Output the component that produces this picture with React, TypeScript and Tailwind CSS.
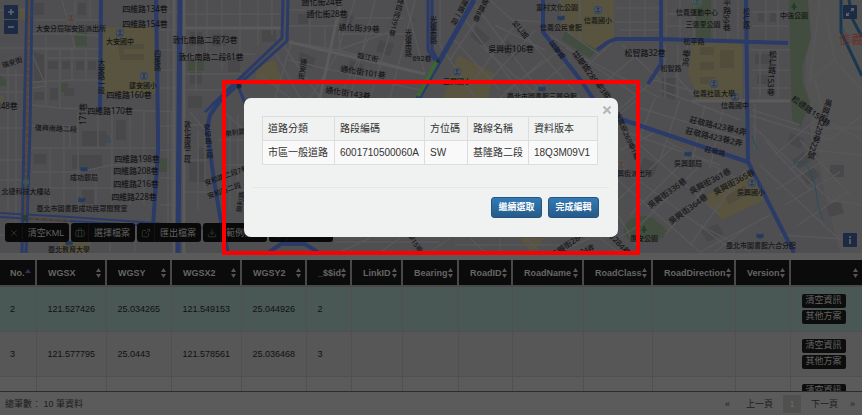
import React from "react";
import { X, Briefcase, ExternalLink, Download, Upload } from "lucide-react";

type Label = [text: string, x: number, y: number, size?: number, angle?: number];

const labels: Label[] = [
  ["四維路134巷", 145, 12, 8],
  ["四維路154巷", 145, 27, 8],
  ["大安分局瑞安街派出所", 71, 31, 7],
  ["大安國中", 120, 44, 7],
  ["建安國小", 143, 88, 7],
  ["四維路160巷", 129, 98, 8],
  ["四維路170巷", 110, 114, 8],
  ["瑞安街", 12, 65, 7, -18],
  ["248巷", 7, 109, 8],
  ["復興南路二段", 56, 131, 7, 3],
  ["大安路一段", 101, 79, 7, 90],
  ["四維路", 157, 63, 7, 90],
  ["171巷", 83, 117, 8, -90],
  ["敦化南路二段73巷", 205, 43, 8],
  ["敦化南路二段81巷", 211, 60, 8],
  ["敦化南路二段", 187, 145, 7, 90],
  ["四維路198巷", 137, 162, 8],
  ["四維路208巷", 136, 174, 8],
  ["四維路216巷", 136, 187, 8],
  ["四維路228巷", 134, 200, 8],
  ["成功郵局", 84, 180, 7],
  ["北捷科技大樓站", 26, 194, 7],
  ["臺北市圖書館成功民眾閱覽室", 82, 211, 7],
  ["臺北教育大學", 69, 252, 7],
  ["安和路二段", 208, 144, 7, 84],
  ["安和路二段7巷", 226, 178, 7, -20],
  ["安和路二段", 224, 193, 7, -20],
  ["樂利路", 235, 135, 7, -8],
  ["樂利路", 240, 205, 7, -80],
  ["通化街24巷", 322, 5, 8],
  ["通化街28巷", 327, 17, 8],
  ["通化街39巷", 359, 31, 8, 3],
  ["臨江街", 368, 60, 7, 12],
  ["通化街101巷", 363, 75, 8, 9],
  ["通化街143巷", 348, 96, 8, 9],
  ["通安街", 302, 72, 7, 98],
  ["光復南路", 408, 46, 7, 90],
  ["光復南路", 433, 33, 7, 90],
  ["692巷", 422, 61, 7],
  ["信義路四段391巷", 398, 13, 7, 105],
  ["莊敬路8巷", 482, 10, 7, 118],
  ["基隆路一段", 461, 12, 7, 118],
  ["三興國小", 457, 84, 7],
  ["吳興街106巷", 511, 52, 8],
  ["富村文化公園", 557, 10, 7],
  ["信義公民會館", 561, 30, 7],
  ["信義國小", 598, 23, 7],
  ["莊敬路", 557, 53, 7, 52],
  ["松仁路", 520, 33, 7, 50],
  ["莊敬路289巷3弄", 592, 78, 8, 53],
  ["臺北市圖書館三興分館", 542, 99, 7],
  ["松智路32巷", 645, 56, 8],
  ["信義運動中心", 697, 15, 7],
  ["三張里公園", 703, 27, 7],
  ["松平路", 694, 44, 7],
  ["中強公園", 794, 18, 7],
  ["松平路99巷", 727, 14, 8, 91],
  ["松仁路", 746, 21, 7, 90],
  ["松仁路153巷", 772, 76, 8, 93],
  ["36巷", 686, 61, 8, -84],
  ["松智路", 671, 71, 7],
  ["信義社區大學", 714, 96, 7],
  ["信義國中", 735, 108, 7],
  ["莊敬路423巷4弄", 718, 129, 8, 13],
  ["莊敬路423巷2弄", 714, 140, 8, 13],
  ["莊敬路", 715, 154, 7, 14],
  ["吳興郵局", 688, 166, 7],
  ["吳興街派出所", 631, 176, 7],
  ["吳興街361巷", 710, 184, 8, -28],
  ["吳興街365巷", 734, 185, 8, -28],
  ["吳興街336巷", 667, 196, 8, -36],
  ["吳興街364巷", 688, 212, 8, -36],
  ["吳興國小", 751, 195, 7],
  ["惠安公園", 644, 241, 7],
  ["臺北市圖書館六合分館", 761, 248, 7],
  ["吳興街220巷22號", 820, 132, 8, 108],
  ["松德路150巷", 811, 114, 8, 36],
  ["吳興街269巷1弄", 627, 139, 7, 66],
  ["吳興街284巷", 570, 246, 8, -36],
  ["24弄", 587, 252, 7, -20],
  ["街284巷", 619, 246, 8, 48],
  ["巷15弄", 415, 246, 7, 58],
];

const streets = [
  "M0 10H25M0 48H75L62 0M32 20H100M32 34H70L100 36M32 49H100M46 58H100M32 82L72 80H100M32 105L60 108L180 112M46 36V105M60 49V108M72 49V80M86 49V82M75 0V34M90 0V20",
  "M32 54L46 86L32 88M0 75H24M0 92H24M0 128H24M0 160H24M8 60V210M16 70V230M0 180H24M0 235H60V252M60 240L155 240M90 228V252M110 228V252M135 228V252",
  "M32 126H70V148M32 148H158M64 126V208M78 112V208M98 112V148M112 112V208M130 112V205M32 172H78L112 165H158M32 188H112M96 172V205M50 148V208M144 112V205",
  "M160 12H178M160 30H178M160 50H178M160 70H178M160 88H178M160 126H178M160 150H178M160 178H178M160 205H178M168 0V225M172 110V228",
  "M184 0V252M184 28H284M184 54H255M184 90H225M184 74H242M184 125H207M184 160H214M184 192H218M196 0V90M207 0V60M222 0V70M240 0V54M258 0V45M272 0V35M184 14H280M190 112L205 130V190M198 130V210",
  "M289 26H375L339 98M289 10H340M289 42L338 50L425 74M338 0L340 50L310 98M289 60L375 80L420 90M310 0V46M325 26V50M284 46L320 98M275 52L300 98M292 40L275 98M355 0L338 50M375 0L350 98M400 0L370 98M415 0L390 98M340 34H405M355 18H405M405 0L425 74M338 50L395 30M260 75L290 98",
  "M440 0V45L475 98M450 35L500 90M475 5L545 98M490 0L512 20L580 98M465 20L525 98M512 20L543 22M450 60L480 15M470 85L515 25M490 80L535 30M505 92L560 50M525 98L570 60M495 25L545 50M480 45L540 98M543 60L500 98M560 0L565 30L600 55M580 0V42M550 35L640 98",
  "M566 48L660 98M585 68L615 40M605 82L640 52M622 45L660 80M640 98L600 130M618 110L655 80L750 108M615 8H661M630 0V39M645 0V39M615 22H661M620 30H661M666 0V39M680 0V39M694 0V39M666 14H694M666 26H694M715 0V39M728 0V39M738 0V39",
  "M665 45V98M678 45V98M688 45L676 76L698 100H789M660 90L740 120M620 130L720 165M640 108L745 140M655 98L635 150M680 100L660 160M705 105L690 170M725 100L710 168M750 50H790M752 70H790M752 88H790M760 50V98M778 50V98M766 0V40M778 0V40M752 12H789M752 26H789M752 110L800 125M755 104V150",
  "M618 180L700 252M618 165L735 252M640 145L720 215M665 140L740 180M700 165L640 225M720 170L665 235M745 170L690 245M620 150L660 130M618 200L675 145M630 215L690 155M618 215L640 252M700 225L750 252M750 225L715 252M770 215L700 252M780 235L860 240M750 115L830 140L862 115",
  "M752 125L830 200L862 205M760 165L840 240M775 155L815 120M790 170L825 135M775 190L825 160M785 205L840 172M798 225L850 190M765 140L810 190M800 140L850 195M812 122V150L862 155M810 128H862M820 0L810 80L835 60L862 90M815 80L825 120L862 140M825 10L835 60",
  "M222 110L244 130M218 140H244M222 165H244M226 190H244M230 115V210M238 115V210M335 242H440M340 252L370 238M380 252L400 238M430 252L450 238M470 238L485 252M500 238V252M525 238L540 252M560 252L590 238M600 238L618 252M455 245H560M618 238L640 225",
];

const buildings = [
  "M34 52l10 3 0 24-10 4zM48 61h10v8h-10zM62 61h8v8h-8zM76 61h8v9h-8zM88 61h8v9h-8zM34 92h10v8h-10zM50 88h8v12h-8zM64 88h10v8h-10zM82 131h24v15h-24zM72 155h30v14h-30zM82 190h12v14h-12zM189 162h16v20h-16zM199 148h14v13h-14zM34 154h12v10h-12zM116 120h10v20h-10zM34 3h10v12h-10zM78 3h8v12h-8z",
  "M190 32h12v14h-12zM212 34h14v12h-14zM228 58h12v14h-12zM262 30h14v12h-14zM188 96h14v12h-14zM190 72h12v12h-12zM298 14h10v10h-10zM344 14l10 2-4 12-8-2zM300 52l16 6-4 10-14-4zM380 40l14 4-4 12-14-5zM350 60l14 5-4 11-12-4zM476 26l14 12-8 8-12-10zM508 40l12 12-8 8-12-12z",
  "M662 78h13v22l-13-4zM755 54h18v10h-18zM757 75h12v9h-12zM758 12h6v10h-6zM770 12h6v10h-6zM644 158l14 6-5 12-14-6zM792 160l12-8 7 9-12 8zM801 175l12-8 7 9-12 8zM790 133l14 6-4 10-12-6zM830 165h14v12h-14zM826 205l14-4 4 12-14 4zM700 230l18-6 6 10-16 8z",
];

const headings: [string, string][] = [
  ["No.", "w-[36px]"],
  ["WGSX", "w-[70px]"],
  ["WGSY", "w-[65px]"],
  ["WGSX2", "w-[70px]"],
  ["WGSY2", "w-[65px]"],
  ["_$$id", "w-[45px]"],
  ["LinkID", "w-[51px]"],
  ["Bearing", "w-[56px]"],
  ["RoadID", "w-[54px]"],
  ["RoadName", "w-[71px]"],
  ["RoadClass", "w-[69px]"],
  ["RoadDirection", "w-[83px]"],
  ["Version", "w-[55px]"],
  ["", "w-[72px]"],
];

const rows = [
  ["2", "121.527426", "25.034265", "121.549153", "25.044926", "2"],
  ["3", "121.577795", "25.0443", "121.578561", "25.036468", "3"],
  ["", "", "", "", "", ""],
];

const tools = [
  { text: "清空KML", Icon: X },
  { text: "選擇檔案", Icon: Briefcase },
  { text: "匯出檔案", Icon: ExternalLink },
  { text: "範例檔案", Icon: Download },
  { text: "上傳檔案", Icon: Upload },
];

function Poi({ x, y, fill = "#26354f" }: { x: number; y: number; fill?: string }) {
  return (
    <g transform={`translate(${x} ${y})`}>
      <circle r="5" fill="#55595e" />
      <circle r="4" fill="#4d545c" stroke={fill} strokeWidth="0.5" />
      <circle cy="-1.5" r="1.2" fill={fill} />
      <path d="M-2.5 2.2Q0-1.2 2.500 2.200z" fill={fill} />
    </g>
  );
}

function Book({ x, y }: { x: number; y: number }) {
  return <path transform={`translate(${x} ${y})`} d="M-4-2l4 1 4-1v5l-4 1-4-1z" fill="#283b56" stroke="#4d545c" strokeWidth="0.7" />;
}

/* Steep street names run top to bottom with upright glyphs; the rest follow a rotated baseline. */
function StreetLabel({ label: [text, x, y, size = 8, angle = 0] }: { label: Label }) {
  const stacked = angle >= 50;
  return (
    <text
      x={x}
      y={stacked ? y - 3 : y}
      fontSize={size}
      className={stacked ? "[writing-mode:vertical-rl]" : ""}
      transform={`rotate(${stacked ? angle - 90 : angle} ${x} ${y - 3})`}
    >
      {text}
    </text>
  );
}

function MapCanvas() {
  return (
    <svg className="block h-full w-full" viewBox="0 0 862 253" preserveAspectRatio="xMidYMid slice" role="img" aria-label="地圖">
      <rect width="862" height="253" fill="#4f4e50" />
      <path d="M808 0H862V253H840L825 195L812 122L805 80z" fill="#535354" />
      <g fill="#58543f">
        <path d="M103 27L155 28L156 94H102z" />
        <path d="M257 66L275 60L281 78L278 88L255 80z" />
        <path d="M561 0H614V38L597 50L561 31z" />
        <path d="M458 55L494 73L488 98H443z" />
        <path d="M692 43H742V101H700L688 74z" />
        <path d="M703 197L755 168L768 198L722 220z" />
        <path d="M60 240L90 238V253H60zM518 238H545L532 253z" />
        <path d="M20 8H25V20H20zM0 96H3V104H0z" />
      </g>
      <g fill="#434d3f">
        <path d="M75 31H87V46H75zM188 61H204V71H188zM60 83H68V92H60zM0 75L6 80V86H0zM158 158H169V172H158z" />
        <path d="M565 31L597 50L590 58L562 40zM692 0H711V38H696V14H692z" />
        <path d="M789 0H808L811 38L802 68L803 84L810 102L800 128L792 120z" />
        <path d="M625 225Q632 215 646 216Q660 220 668 233Q655 245 635 241Q620 238 625 225z" />
      </g>
      <path d="M118 44H144V49H124V54H144V60H120zM700 47h14v8h-14zM700 62h14v8h-14zM700 77h16v7h-16zM720 50h14v18h-14zM725 197l20-12 4 8-20 12z" fill="#504d3d" />
      <g fill="#484749">{buildings.map((d) => <path key={d} d={d} />)}</g>
      <g fill="none" stroke="#58585a" strokeWidth="1.4">{streets.map((d) => <path key={d} d={d} />)}</g>
      <g fill="none" stroke="#5b5b5c" strokeWidth="3">
        <path d="M184 0V253M174 0V253M341 0L320 98M289 42L425 74M184 28H284M692 101H790" />
      </g>
      <g fill="none" stroke="#284e5e" strokeWidth="1">
        <path d="M752 136L757 150M793 165Q800 158 808 167L815 185L818 205L823 220M107 135l4 7h-4zM843 28l2 5M413 18l2 4" />
      </g>
      <g fill="none" stroke="#2a3b69" strokeWidth="3" strokeLinejoin="round">
        <path d="M27 0L24 130L22 253M32 0L30 130L26 253" />
        <path d="M101 0L100 112M156 0L158 130V150L153 227" strokeWidth="4" />
        <path d="M180 0L178 253" strokeWidth="5" />
        <path d="M222 98L210 115L207 130L214 180L221 222L228 253" strokeWidth="4" />
        <path d="M283 0L282 38L212 105M288 0L287 41L216 105" />
        <path d="M244 75L205 112M238 86L246 106" />
        <path d="M0 213L70 217L155 223L228 231M0 217L70 221L155 226" strokeWidth="2" />
        <path d="M474 0L448 46L418 99" strokeWidth="5" />
        <path d="M428 0V50L436 62M432 0V50L438 60" />
        <path d="M543 0V32L582 82L602 112M612 116L650 129L748 162" strokeWidth="4" />
        <path d="M597 50L608 42L616 39H660L788 43M661 0V64L648 84M746 0L748 162L794 253" strokeWidth="4" />
        <path d="M268 253L281 244H305L319 253" strokeWidth="4" />
      </g>
      <g fill="none" stroke="#183850" strokeWidth="3">
        <path d="M841 0L841 32L862 76M849 0L853 20L862 37" />
      </g>
      <path d="M29 0L27 130L25 218L70 221" fill="none" stroke="#5a4526" strokeWidth="2" strokeDasharray="5 2" />
      <path d="M437 61L418 96" stroke="#3c6633" strokeWidth="4" />
      <circle cx="26" cy="182" r="3" fill="#3c5550" />
      <rect x="22" y="215" width="6" height="6" fill="#253b3e" />
      <circle cx="438" cy="61" r="2" fill="#20303a" />
      <circle cx="239" cy="86" r="2.5" fill="#182633" />
      <Poi x={120} y={33} /><Poi x={144} y={76} /><Poi x={457} y={72} /><Poi x={598} y={10} />
      <Poi x={714} y={84} /><Poi x={735} y={97} /><Poi x={752} y={183} /><Poi x={71} y={18} fill="#633a22" />
      <Poi x={697} y={2} fill="#2b4f3c" /><Poi x={621} y={165} fill="#633a22" />
      <Book x={561} y={17} /><Book x={542} y={88} /><Book x={84} y={168} /><Book x={82} y={199} />
      <Book x={688} y={153} /><Book x={760} y={235} /><Book x={69} y={242} />
      <path d="M794 2l3 6h-2v2h-2v-2h-2zM644 225l3 6h-2v2h-2v-2h-2z" fill="#21402a" />
      <g fill="#161617" textAnchor="middle" className="font-['Noto_Sans','Noto_Sans_CJK_TC',sans-serif] font-medium">
        {labels.map((label) => <StreetLabel key={label.slice(0, 3).join()} label={label} />)}
      </g>
      <text x="839" y="44" fontSize="12" fill="#6b3028" className="font-['Noto_Sans_CJK_TC',sans-serif]">信義</text>
    </svg>
  );
}

function SortMark({ active }: { active?: boolean }) {
  return active ? (
    <svg className="-mt-1 h-[4px] w-[6px]" viewBox="0 0 6 4"><path d="M3 0L6 4H0z" fill="#30305c" /></svg>
  ) : (
    <svg className="h-[10px] w-[5px] shrink-0" viewBox="0 0 5 10"><path d="M2.5 0L5 4H0zM2.5 10L5 6H0z" fill="#555" /></svg>
  );
}

function MapButton({ label, children }: { label: string; children: React.ReactNode }) {
  return (
    <button aria-label={label} className="flex size-[14px] items-center justify-center rounded-[1px] bg-[#1d2a44] text-[#62666e]">
      <svg className="size-[10px]" viewBox="0 0 10 10" fill="none" stroke="currentColor" strokeWidth="1.6">{children}</svg>
    </button>
  );
}

function ConfirmDialog() {
  const button =
    "h-[21px] w-[51px] rounded-[3px] border border-[#245580] bg-linear-to-b from-[#337ab7] to-[#265a88] text-[9px] font-bold leading-none text-white";
  return (
    <div className="absolute inset-0 z-10 flex items-start justify-center pt-[80px]">
      <div className="border-4 border-[#ff0000] px-[18px] py-[14px]">
        <div role="dialog" aria-label="路段資料" className="relative w-[374px] rounded-[7px] bg-[#f0f2f2] px-[9px] pt-[18px] pb-[19px] text-[#333]">
          <button aria-label="關閉" className="absolute top-[8px] right-[7px] text-[#b4b6b6]">
            <svg className="size-[8px]" viewBox="0 0 8 8" stroke="currentColor" strokeWidth="2"><path d="M.5.5l7 7M7.5.5l-7 7" /></svg>
          </button>
          <table className="ml-[9px] w-[336px] table-fixed border-collapse text-left text-[10px] leading-[14px] whitespace-nowrap">
            <thead>
              <tr className="h-[24px]">
                <th className="w-[72px] border border-[#ddd] px-[5px] font-normal">道路分類</th>
                <th className="w-[90px] border border-[#ddd] px-[5px] font-normal">路段編碼</th>
                <th className="w-[43px] border border-[#ddd] px-[5px] font-normal">方位碼</th>
                <th className="w-[61px] border border-[#ddd] px-[5px] font-normal">路線名稱</th>
                <th className="w-[69px] border border-[#ddd] px-[5px] font-normal">資料版本</th>
              </tr>
            </thead>
            <tbody>
              <tr className="h-[24px] bg-[#f9f9f9]">
                {["市區一般道路", "6001710500060A", "SW", "基隆路二段", "18Q3M09V1"].map((v) => (
                  <td key={v} className="border border-[#ddd] px-[5px]">{v}</td>
                ))}
              </tr>
            </tbody>
          </table>
          <div className="mt-[22px] flex justify-end gap-[6px] border-t border-[#e5e6e6] pt-[9px] pr-[10px]">
            <button className={button}>繼續選取</button>
            <button className={button}>完成編輯</button>
          </div>
        </div>
      </div>
    </div>
  );
}

export default function App() {
  return (
    <div className="relative flex h-screen flex-col overflow-hidden bg-[#5a5a5a] font-['Liberation_Sans','Noto_Sans_CJK_TC',sans-serif] text-[9px] leading-[12px] text-[#111]">
      <section className="relative h-[253px] shrink-0 overflow-hidden">
        <MapCanvas />
        <div className="absolute top-[5px] left-[4px] flex flex-col gap-px">
          <MapButton label="放大"><path d="M5 2v6M2 5h6" /></MapButton>
          <MapButton label="縮小"><path d="M2 5h6" /></MapButton>
        </div>
        <div className="absolute top-[5px] right-[5px]">
          <MapButton label="全螢幕"><path d="M6 4l2-2M4 6L2 8" /><path d="M5.5 1H9v3.500zM1 5.500V9h3.500z" fill="currentColor" stroke="none" /></MapButton>
        </div>
        <div className="absolute right-[5px] bottom-[6px]">
          <MapButton label="圖資說明"><path d="M5 1v2M5 4v5" /></MapButton>
        </div>
        <div className="absolute bottom-[11px] left-[5px] flex gap-[2px]">
          {tools.map(({ text, Icon }) => (
            <button key={text} className="flex h-[19px] w-[64px] items-center rounded-[3px] bg-[#090909] text-[9px] text-[#626262]">
              <span className="flex h-full w-[18px] shrink-0 items-center justify-center border-r border-[#121212] text-[#2b3b2e]">
                <Icon size={10} strokeWidth={2} />
              </span>
              <span className="flex-1 text-center whitespace-nowrap">{text}</span>
            </button>
          ))}
        </div>
      </section>

      <main className="min-h-0 flex-1 overflow-hidden pt-[7px]">
        <table className="w-full table-fixed border-collapse text-left">
          <thead>
            <tr className="h-[26px] bg-[#0b0b0b] text-[#666]">
              {headings.map(([name, width], i) => (
                <th key={name} aria-label={name || "操作"} className={`${width} border-r-2 border-b-2 border-[#484848] p-0 last:border-r-0`}>
                  <div className={`flex items-center justify-between pr-[4px] ${i === 0 ? "pl-[10px]" : "pl-[11px]"}`}>
                    <span>{name}</span>
                    <SortMark active={i === 0} />
                  </div>
                </th>
              ))}
            </tr>
          </thead>
          <tbody>
            {rows.map((row, r) => (
              <tr key={r} className={`h-[45px] ${r === 0 ? "bg-[#4a5855]" : r === 1 ? "bg-[#575757]" : "bg-[#5b5b5b]"}`}>
                {headings.map(([name], i) => (
                  <td key={name} className={`border-r border-b border-[#505050] p-0 last:border-r-0 ${i === 0 ? "pl-[10px]" : "pl-[11px]"}`}>
                    {i < 13 ? (
                      row[i]
                    ) : (
                      <div className="flex flex-col items-start gap-[2px]">
                        {["清空資訊", "其他方案"].map((t) => (
                          <button key={t} className="h-[14px] w-[44px] rounded-[2px] bg-[#0d0d0d] leading-none text-[#656565]">{t}</button>
                        ))}
                      </div>
                    )}
                  </td>
                ))}
              </tr>
            ))}
          </tbody>
        </table>
      </main>

      <footer className="flex h-[24px] shrink-0 items-center justify-between border-t border-[#2d2d2d] bg-[#5b5b5b] pr-[7px] pl-[5px] text-[#1d1d1d]">
        <p>總筆數： 10 筆資料</p>
        <nav aria-label="分頁" className="flex items-center gap-[10px]">
          <a href="#first" className="mr-[6px]">«</a>
          <a href="#prev">上一頁</a>
          <a href="#page" className="flex h-[18px] w-[18px] items-center justify-center bg-[#50504e] text-[#6b6b6b]">1</a>
          <a href="#next">下一頁</a>
          <a href="#last" className="ml-[2px]">»</a>
        </nav>
      </footer>
      <ConfirmDialog />
    </div>
  );
}
